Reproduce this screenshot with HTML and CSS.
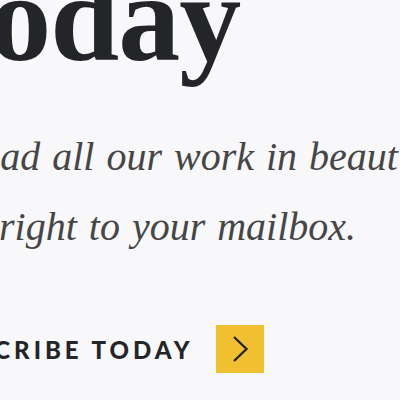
FILE: index.html
```html
<!DOCTYPE html>
<html lang="en">
<head>
<meta charset="utf-8">
<title>Subscribe Today</title>
<link rel="stylesheet" href="styles.css">
</head>
<body>
<main class="hero">
  <h1 class="title">Today</h1>
  <p class="lead">Read all our work in beautiful print, delivered<br>right to your mailbox.</p>
  <div class="cta">
    <span class="cta-label">SUBSCRIBE TODAY</span>
    <a class="cta-btn" href="#" aria-label="Subscribe">
      <svg width="48" height="48" viewBox="0 0 48 48" aria-hidden="true"><path d="M18 12 L30.5 24 L18 36" fill="none" stroke="#23221f" stroke-width="2.3"/></svg>
    </a>
  </div>
</main>
</body>
</html>
```

FILE: styles.css
```css
html, body {
  margin: 0;
  padding: 0;
}
body {
  background: #f8f8fa;
  width: 400px;
  height: 400px;
  overflow: hidden;
}
.hero {
  display: flex;
  flex-direction: column;
  align-items: flex-start;
}
.title {
  margin: -43px 0 0 -81px;
  font-family: "Liberation Serif", serif;
  font-weight: 700;
  font-size: 124px;
  line-height: 124px;
  letter-spacing: -1px;
  color: #232528;
  white-space: nowrap;
}
.lead {
  margin: 41px 0 0 -1px;
  text-indent: -41px;
  font-family: "Liberation Serif", serif;
  font-style: italic;
  font-size: 40px;
  line-height: 70px;
  word-spacing: 2px;
  color: #464646;
  white-space: nowrap;
}
.cta {
  margin: 63px 0 0 -82px;
  display: flex;
  align-items: center;
  gap: 22px;
}
.cta-label {
  font-family: Lato, "Liberation Sans", sans-serif;
  font-weight: 900;
  font-size: 24px;
  letter-spacing: 4px;
  color: #232528;
  white-space: nowrap;
}
.cta-btn {
  display: flex;
  width: 48px;
  height: 48px;
  background: #f0c030;
}
```
